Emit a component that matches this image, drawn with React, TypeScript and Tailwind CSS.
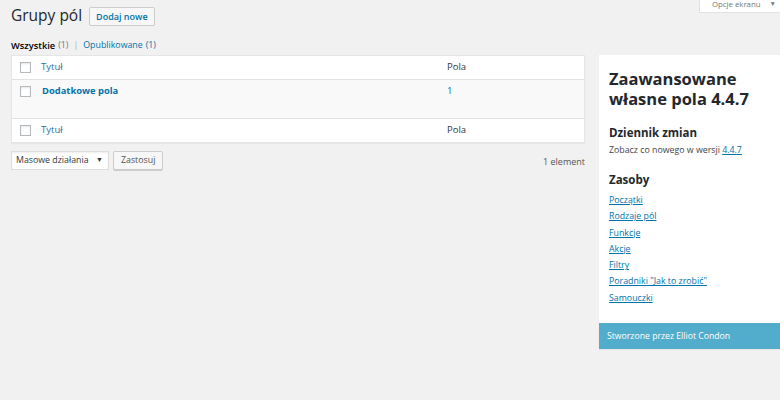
import React from "react";

const links = [
  "Początki",
  "Rodzaje pól",
  "Funkcje",
  "Akcje",
  "Filtry",
  'Poradniki "Jak to zrobić"',
  "Samouczki",
];

function Check() {
  return <span className="block h-[11px] w-[11px] shrink-0 border border-[#b4b9be] bg-white shadow-[inset_0_1px_2px_rgba(0,0,0,0.1)]" />;
}

function HeadRow({ top }: { top?: boolean }) {
  return (
    <div className={`flex h-[24px] items-center text-[9.5px] text-[#32373c] ${top ? "border-b" : "border-t"} border-[#e1e1e1]`}>
      <div className="w-[29px] pl-[8px]">
        <Check />
      </div>
      <div className="w-[406px] text-[#2a6f9f]">Tytuł</div>
      <div className="flex-1">Pola</div>
    </div>
  );
}

export default function App() {
  return (
    <div className="relative h-[400px] w-[780px] overflow-hidden bg-[#f1f1f1] text-[#444]" style={{ fontFamily: '"Open Sans", sans-serif' }}>
      {/* Screen options tab */}
      <div className="absolute right-0 top-0 h-[12px] w-[80px] overflow-hidden bg-white shadow-[0_0_0_1px_rgba(0,0,0,0.06)]">
        <div className="-mt-[3px] flex items-center gap-[9px] whitespace-nowrap pl-[12px] text-[7.8px] leading-[14px] text-[#72777c]">
          <span>Opcje ekranu</span>
          <span className="text-[6.5px]">▼</span>
        </div>
      </div>

      <div className="flex gap-[14px] pl-[11px]">
        {/* Main column */}
        <div className="w-[574px]">
          <div className="flex h-[29px] items-center gap-[7px] pt-[3px]">
            <h1 className="text-[15.5px] leading-none text-[#23282d]">Grupy pól</h1>
            <button className="h-[19px] rounded-[2px] border border-[#ccc] bg-[#f7f7f7] px-[6px] text-[9px] font-semibold leading-none text-[#0073aa]">
              Dodaj nowe
            </button>
          </div>

          <div className="mt-[10px] flex h-[14px] items-center text-[8.8px] text-[#666]">
            <span className="text-[9.3px] font-semibold text-black">Wszystkie</span>
            <span className="ml-[3px] text-[#72777c]">(1)</span>
            <span className="mx-[5px] text-[#aaa]">|</span>
            <span className="text-[#0073aa]">Opublikowane</span>
            <span className="ml-[3px] text-[#0073aa]">(1)</span>
          </div>

          <div className="mt-[2px] border border-[#e5e5e5] bg-white shadow-[0_1px_1px_rgba(0,0,0,0.04)]">
            <HeadRow top />
            <div className="flex h-[38px] items-start bg-[#f9f9f9] text-[9.4px] leading-[13px]">
              <div className="w-[29px] pl-[8px] pt-[6px]">
                <Check />
              </div>
              <div className="w-[406px] pl-[1px] pt-[4px] font-bold text-[#0073aa]">Dodatkowe pola</div>
              <div className="flex-1 pt-[4px] text-[#0073aa]">1</div>
            </div>
            <HeadRow />
          </div>

          <div className="mt-[8px] flex items-center">
            <div className="flex h-[19px] w-[98px] items-center justify-between whitespace-nowrap border border-[#ddd] bg-white pl-[4px] pr-[5px] text-[8.8px] text-[#32373c] shadow-[inset_0_1px_2px_rgba(0,0,0,0.07)]">
              <span>Masowe działania</span>
              <span className="text-[7px] text-[#333]">▼</span>
            </div>
            <button className="ml-[4px] h-[19px] rounded-[2px] border border-[#ccc] bg-[#f7f7f7] px-[7px] text-[8.8px] leading-none text-[#555] shadow-[0_1px_0_#ccc]">
              Zastosuj
            </button>
            <span className="ml-auto pt-[2px] text-[9px] text-[#555]">1 element</span>
          </div>
        </div>

        {/* Sidebar */}
        <div className="mt-[55px] flex-1 bg-white shadow-[0_1px_1px_rgba(0,0,0,0.04)]">
          <div className="px-[10px] pb-[17px] pt-[14px] text-[#23282d]">
            <h2 className="flex flex-col text-[16.5px] font-bold leading-[20px]">
              <span>Zaawansowane</span>
              <span>własne pola 4.4.7</span>
            </h2>
            <h3 className="mt-[16px] text-[11.5px] font-bold leading-[16px]">Dziennik zmian</h3>
            <p className="mt-[3px] text-[8.8px] leading-[13px] text-[#444]">
              Zobacz co nowego w wersji <span className="text-[#0073aa] underline">4.4.7</span>
            </p>
            <h3 className="mt-[15px] text-[11.5px] font-bold leading-[16px]">Zasoby</h3>
            <div className="mt-[4px] flex flex-col">
              {links.map((l) => (
                <span key={l} className="h-[16.3px] text-[8.8px] leading-[16px] text-[#0073aa] underline">
                  {l}
                </span>
              ))}
            </div>
          </div>
          <div className="flex h-[26px] items-center bg-[#52accc] px-[8px] text-[8.7px] text-white">
            Stworzone przez Elliot Condon
          </div>
        </div>
      </div>
    </div>
  );
}
